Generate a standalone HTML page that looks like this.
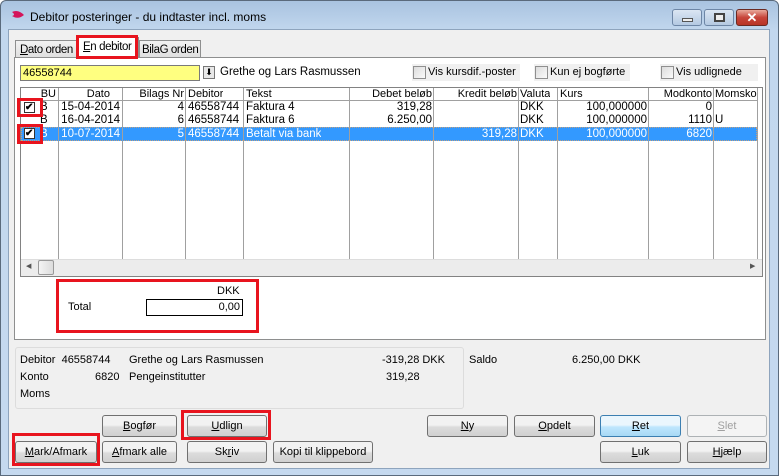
<!DOCTYPE html>
<html><head><meta charset="utf-8"><style>
*{box-sizing:border-box;margin:0;padding:0}
body{width:779px;height:476px;overflow:hidden;background:#fff;font-family:"Liberation Sans",Arial,sans-serif;font-size:11px;color:#000;position:relative}
.a{position:absolute;white-space:nowrap}
.frame{left:0;top:0;width:779px;height:476px;background:linear-gradient(#a9c3e0,#c2d7ee 30px,#c5d9ef);border:1px solid #5a6a7c;border-radius:6px 6px 0 0}
.client{left:8px;top:29px;width:762px;height:440px;background:#f0f0f0;border:1px solid #8ea4bd}
.btn{position:absolute;height:22px;border:1px solid #707070;border-radius:3px;background:linear-gradient(#f2f2f2 45%,#dcdcdc 55%,#d0d0d0);text-align:center;line-height:20px;white-space:nowrap}
.red{position:absolute;border:3px solid #e8141e}
.cb{position:absolute;width:13px;height:13px;border:1px solid #8f8f8f;background:linear-gradient(135deg,#dcdcdc,#fafafa)}
.cell{position:absolute;height:13px;line-height:13px;white-space:nowrap;overflow:hidden}
.r{text-align:right}
.vl{position:absolute;top:88px;height:171px;width:1px;background:#a0a0a0}
.tab{letter-spacing:-0.4px;font-size:11.5px}
u{text-decoration:underline}
</style></head><body>
<div class="a frame"></div>
<svg class="a" style="left:10px;top:9px" width="16" height="12"><path d="M2 3 Q8 0 14 6 Q8 11 2 7 Q6 6 2 3Z" fill="#d4145a"/></svg>
<div class="a" style="left:30px;top:10px;font-size:12px">Debitor posteringer - du indtaster incl. moms</div>
<div class="a" style="left:672px;top:9px;width:30px;height:17px;border:1px solid #6d86a6;border-radius:3px;background:linear-gradient(#dbe6f3,#b4c9e2)"><div class="a" style="left:9px;top:8px;width:11px;height:4px;background:#eee;border:1px solid #555"></div></div>
<div class="a" style="left:704px;top:9px;width:30px;height:17px;border:1px solid #6d86a6;border-radius:3px;background:linear-gradient(#dbe6f3,#b4c9e2)"><div class="a" style="left:9px;top:3px;width:11px;height:9px;border:2px solid #444;background:#eee"></div></div>
<div class="a" style="left:736px;top:9px;width:32px;height:17px;border:1px solid #6b2a22;border-radius:3px;background:linear-gradient(#e9a99b,#c7453a 50%,#b83426);color:#fff;font-weight:bold;font-size:13px;text-align:center;line-height:15px">✕</div>
<div class="a client"></div>
<!-- tabs -->
<div class="a tab" style="left:15px;top:40px;width:62px;height:18px;border:1px solid #8e8f8f;border-bottom:none;background:linear-gradient(#f2f2f2,#dedede);padding:3px 0 0 4px"><u>D</u>ato orden</div>
<div class="a tab" style="left:139px;top:40px;width:62px;height:18px;border:1px solid #8e8f8f;border-bottom:none;background:linear-gradient(#f2f2f2,#dedede);padding:3px 0 0 2px">BilaG orden</div>
<div class="a tab" style="left:77px;top:37px;width:62px;height:21px;border:1px solid #8e8f8f;border-bottom:none;background:#fff;padding:3px 0 0 5px;z-index:2"><u>E</u>n debitor</div>
<div class="red" style="left:76px;top:35px;width:62px;height:24px;z-index:3"></div>
<div class="a" style="left:14px;top:57px;width:752px;height:283px;background:#fff;border:1px solid #8e8f8f"></div>
<!-- input -->
<div class="a" style="left:20px;top:65px;width:180px;height:16px;background:#ffff80;border:1px solid #7a7a7a;padding:1px 0 0 2px">46558744</div>
<div class="a" style="left:203px;top:66px;width:12px;height:13px;border:1px solid #777;background:#e8e8e8;text-align:center;font-size:9px;line-height:11px">⬇</div>
<div class="a" style="left:220px;top:66px;font-size:11.5px">Grethe og Lars Rasmussen</div>
<div class="a" style="left:412px;top:64px;width:108px;height:17px;background:#f0f0f0"></div><div class="cb" style="left:413px;top:66px"></div><div class="a" style="left:428px;top:66px">Vis kursdif.-poster</div>
<div class="a" style="left:534px;top:64px;width:96px;height:17px;background:#f0f0f0"></div><div class="cb" style="left:535px;top:66px"></div><div class="a" style="left:550px;top:66px">Kun ej bogførte</div>
<div class="a" style="left:660px;top:64px;width:98px;height:17px;background:#f0f0f0"></div><div class="cb" style="left:661px;top:66px"></div><div class="a" style="left:676px;top:66px">Vis udlignede</div>
<!-- grid -->
<div class="a" style="left:20px;top:87px;width:743px;height:190px;border:1px solid #828282;background:#fff"></div>
<div class="a" style="left:21px;top:88px;width:736px;height:13px;background:#fff;border-bottom:1px solid #a0a0a0"></div>
<div class="a" style="left:21px;top:127px;width:736px;height:14px;background:#3399ff;border:1px dotted #c0a080"></div>
<div class="vl" style="left:58px"></div><div class="vl" style="left:122px"></div><div class="vl" style="left:185px"></div><div class="vl" style="left:243px"></div><div class="vl" style="left:349px"></div><div class="vl" style="left:433px"></div><div class="vl" style="left:518px"></div><div class="vl" style="left:557px"></div><div class="vl" style="left:648px"></div><div class="vl" style="left:713px"></div><div class="vl" style="left:757px"></div>
<div class="cell r" style="left:22px;top:88px;width:34px">BU</div>
<div class="cell r" style="left:60px;top:88px;width:50px">Dato</div>
<div class="cell r" style="left:124px;top:88px;width:60px">Bilags Nr</div>
<div class="cell" style="left:188px;top:88px">Debitor</div>
<div class="cell" style="left:246px;top:88px">Tekst</div>
<div class="cell r" style="left:350px;top:88px;width:82px">Debet beløb</div>
<div class="cell r" style="left:434px;top:88px;width:83px">Kredit beløb</div>
<div class="cell" style="left:520px;top:88px">Valuta</div>
<div class="cell" style="left:560px;top:88px">Kurs</div>
<div class="cell r" style="left:649px;top:88px;width:63px">Modkonto</div>
<div class="cell" style="left:715px;top:88px;width:42px">Momskode</div>
<!-- rows -->
<div style="font-size:11.5px">
<div class="cell" style="left:40px;top:101px">B</div><div class="cell r" style="left:60px;top:101px;width:60px">15-04-2014</div><div class="cell r" style="left:124px;top:101px;width:60px">4</div><div class="cell" style="left:188px;top:101px">46558744</div><div class="cell" style="left:246px;top:101px">Faktura 4</div><div class="cell r" style="left:350px;top:101px;width:82px">319,28</div><div class="cell" style="left:520px;top:101px">DKK</div><div class="cell r" style="left:560px;top:101px;width:87px">100,000000</div><div class="cell r" style="left:649px;top:101px;width:63px">0</div>
<div class="cell" style="left:40px;top:114px">B</div><div class="cell r" style="left:60px;top:114px;width:60px">16-04-2014</div><div class="cell r" style="left:124px;top:114px;width:60px">6</div><div class="cell" style="left:188px;top:114px">46558744</div><div class="cell" style="left:246px;top:114px">Faktura 6</div><div class="cell r" style="left:350px;top:114px;width:82px">6.250,00</div><div class="cell" style="left:520px;top:114px">DKK</div><div class="cell r" style="left:560px;top:114px;width:87px">100,000000</div><div class="cell r" style="left:649px;top:114px;width:63px">1110</div><div class="cell" style="left:715px;top:114px">U</div>
<div style="color:#fff"><div class="cell" style="left:40px;top:128px">B</div><div class="cell r" style="left:60px;top:128px;width:60px">10-07-2014</div><div class="cell r" style="left:124px;top:128px;width:60px">5</div><div class="cell" style="left:188px;top:128px">46558744</div><div class="cell" style="left:246px;top:128px">Betalt via bank</div><div class="cell r" style="left:434px;top:128px;width:83px">319,28</div><div class="cell" style="left:520px;top:128px">DKK</div><div class="cell r" style="left:560px;top:128px;width:87px">100,000000</div><div class="cell r" style="left:649px;top:128px;width:63px">6820</div></div>
</div>
<div class="cb" style="left:24px;top:102px;width:11px;height:11px;background:#fff;border-color:#333;font-size:10px;line-height:9px;font-weight:bold">✔</div>
<div class="cb" style="left:24px;top:128px;width:11px;height:11px;background:#fff;border-color:#333;font-size:10px;line-height:9px;font-weight:bold">✔</div>
<div class="red" style="left:17px;top:98px;width:26px;height:19px"></div>
<div class="red" style="left:17px;top:124px;width:26px;height:20px"></div>
<!-- scrollbar -->
<div class="a" style="left:21px;top:259px;width:741px;height:17px;background:#ececec;border-top:1px solid #ddd"></div>
<div class="a" style="left:26px;top:262px;font-size:7px;color:#555">◀</div>
<div class="a" style="left:38px;top:260px;width:16px;height:15px;border:1px solid #999;border-radius:2px;background:linear-gradient(90deg,#f4f4f4,#dcdcdc)"></div>
<div class="a" style="left:750px;top:262px;font-size:7px;color:#555">▶</div>
<!-- total -->
<div class="a" style="left:217px;top:285px">DKK</div>
<div class="a" style="left:68px;top:301px">Total</div>
<div class="a" style="left:146px;top:299px;width:97px;height:17px;border:1px solid #000;text-align:right;padding:1px 2px 0 0">0,00</div>
<div class="red" style="left:56px;top:279px;width:203px;height:54px"></div>
<!-- info panel -->
<div class="a" style="left:15px;top:347px;width:449px;height:62px;border:1px solid #dcdcdc;border-radius:3px"></div>
<div class="a" style="left:20px;top:354px">Debitor&nbsp; 46558744</div><div class="a" style="left:129px;top:354px">Grethe og Lars Rasmussen</div><div class="a" style="left:382px;top:354px">-319,28 DKK</div>
<div class="a" style="left:20px;top:371px">Konto</div><div class="a" style="left:95px;top:371px">6820</div><div class="a" style="left:129px;top:371px">Pengeinstitutter</div><div class="a" style="left:386px;top:371px">319,28</div>
<div class="a" style="left:20px;top:388px">Moms</div>
<div class="a" style="left:469px;top:354px">Saldo</div><div class="a" style="left:572px;top:354px">6.250,00 DKK</div>
<!-- buttons -->
<div class="btn" style="left:102px;top:415px;width:75px"><u>B</u>ogfør</div>
<div class="btn" style="left:187px;top:415px;width:80px"><u>U</u>dlign</div>
<div class="red" style="left:181px;top:410px;width:90px;height:30px"></div>
<div class="btn" style="left:15px;top:441px;width:82px"><u>M</u>ark/Afmark</div>
<div class="red" style="left:12px;top:433px;width:88px;height:33px"></div>
<div class="btn" style="left:102px;top:441px;width:75px"><u>A</u>fmark alle</div>
<div class="btn" style="left:187px;top:441px;width:80px">Sk<u>r</u>iv</div>
<div class="btn" style="left:273px;top:441px;width:100px">Kopi til klippebord</div>
<div class="btn" style="left:427px;top:415px;width:81px"><u>N</u>y</div>
<div class="btn" style="left:514px;top:415px;width:81px"><u>O</u>pdelt</div>
<div class="btn" style="left:600px;top:415px;width:81px;border-color:#3c7fb1;background:linear-gradient(#eaf6fd 45%,#bee6fd 55%,#a7d9f5)"><u>R</u>et</div>
<div class="btn" style="left:687px;top:415px;width:80px;color:#a0a0a0;border-color:#adb2b5;background:#f4f4f4"><u>S</u>let</div>
<div class="btn" style="left:600px;top:441px;width:81px"><u>L</u>uk</div>
<div class="btn" style="left:687px;top:441px;width:80px"><u>H</u>jælp</div>
</body></html>
